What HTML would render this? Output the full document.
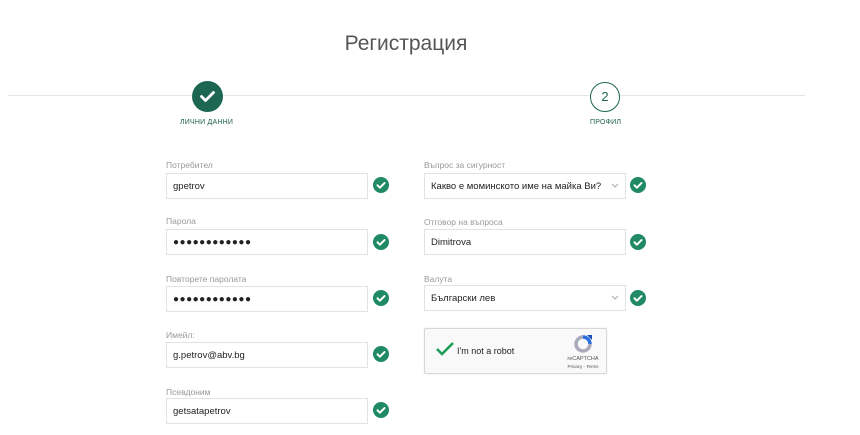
<!DOCTYPE html>
<html><head><meta charset="utf-8"><style>
*{box-sizing:border-box;margin:0;padding:0}
body{width:860px;height:435px;background:#fff;font-family:"Liberation Sans",sans-serif;position:relative;overflow:hidden;color:#333}
.a{position:absolute}
h1{position:absolute;left:0;width:812px;top:32px;text-align:center;font-weight:normal;font-size:21px;color:#555}
.line{left:8px;width:797px;top:95px;height:1px;background:#e3e6e6}
.lbl{font-size:8.5px;color:#999}
.inp{border:1px solid #e2e2e2;height:26px;font-size:9.5px;color:#222;padding-left:6px;line-height:26px;background:#fff}
.ck{width:16px;height:16px;border-radius:50%;background:#1f8a63}
.ck svg{position:absolute;left:0;top:0}
.st{font-size:7px;color:#1b5e4c;letter-spacing:.2px}
.dots{font-size:10px;letter-spacing:0.5px}
.chev{position:absolute;right:6px;top:9px}
</style></head><body>
<h1>Регистрация</h1>
<div class="a line"></div>
<div class="a" style="left:192px;top:81px;width:31px;height:31px;border-radius:50%;background:#1d6652"><svg width="31" height="31"><path d="M9.5 15.5l4 4 8-8" stroke="#fff" stroke-width="2.8" fill="none" stroke-linecap="round" stroke-linejoin="round"/></svg></div>
<div class="a st" style="left:180px;top:119px">ЛИЧНИ ДАННИ</div>
<div class="a" style="left:590px;top:82px;width:30px;height:30px;border-radius:50%;background:#fff;border:1.5px solid #1d6652;text-align:center;line-height:27px;font-size:13px;color:#1d6652">2</div>
<div class="a st" style="left:590px;top:119px">ПРОФИЛ</div>

<div class="a lbl" style="left:166px;top:160px">Потребител</div>
<div class="a inp" style="left:166px;top:173px;width:202px">gpetrov</div>
<div class="a lbl" style="left:166px;top:216px">Парола</div>
<div class="a inp dots" style="left:166px;top:229px;width:202px">●●●●●●●●●●●●</div>
<div class="a lbl" style="left:166px;top:274px">Повторете паролата</div>
<div class="a inp dots" style="left:166px;top:286px;width:202px">●●●●●●●●●●●●</div>
<div class="a lbl" style="left:166px;top:330px">Имейл:</div>
<div class="a inp" style="left:166px;top:342px;width:202px">g.petrov@abv.bg</div>
<div class="a lbl" style="left:166px;top:387px">Псевдоним</div>
<div class="a inp" style="left:166px;top:398px;width:202px">getsatapetrov</div>

<div class="a lbl" style="left:424px;top:160px">Въпрос за сигурност</div>
<div class="a inp" style="left:424px;top:173px;width:202px">Какво е моминското име на майка Ви?<svg class="chev" width="8" height="6"><path d="M1 1l3 3 3-3" stroke="#aaa" fill="none"/></svg></div>
<div class="a lbl" style="left:424px;top:217px">Отговор на въпроса</div>
<div class="a inp" style="left:424px;top:229px;width:202px">Dimitrova</div>
<div class="a lbl" style="left:424px;top:274px">Валута</div>
<div class="a inp" style="left:424px;top:285px;width:202px">Български лев<svg class="chev" width="8" height="6"><path d="M1 1l3 3 3-3" stroke="#aaa" fill="none"/></svg></div>

<div class="a" style="left:424px;top:328px;width:183px;height:46px;border:1px solid #d6d6d6;border-radius:2px;background:#f9f9f9;box-shadow:0 0 2px rgba(0,0,0,.08)">
<svg class="a" style="left:10px;top:12px" width="20" height="16"><path d="M2 8l5 5 11-11" stroke="#1e9e55" stroke-width="2.6" fill="none"/></svg>
<div class="a" style="left:32px;top:17px;font-size:9px;color:#222">I'm not a robot</div>
<svg class="a" style="left:148px;top:5px" width="20" height="20"><path d="M10 3a7 7 0 1 0 7 7" stroke="#aab" stroke-width="3.5" fill="none"/><path d="M10 3a7 7 0 0 1 7 7" stroke="#2a6ee0" stroke-width="3.5" fill="none"/><path d="M14 1l5 0 0 5z" fill="#1a4fba"/></svg>
<div class="a" style="left:138px;top:27px;font-size:5.5px;color:#555;width:40px;text-align:center">reCAPTCHA</div>
<div class="a" style="left:138px;top:35px;font-size:4.5px;color:#555;width:40px;text-align:center">Privacy - Terms</div>
</div>

<div id="cks"></div>
<script>
var p=[[373,177],[373,234],[373,290],[373,346],[373,402],[630,177],[630,234],[630,290]];
var h='';p.forEach(function(c){h+='<div class="a ck" style="left:'+c[0]+'px;top:'+c[1]+'px"><svg width="16" height="16"><path d="M4.5 8.3l2.4 2.4 4.6-4.6" stroke="#fff" stroke-width="2" fill="none" stroke-linecap="round" stroke-linejoin="round"/></svg></div>'});
document.getElementById('cks').innerHTML=h;
</script>
</body></html>
